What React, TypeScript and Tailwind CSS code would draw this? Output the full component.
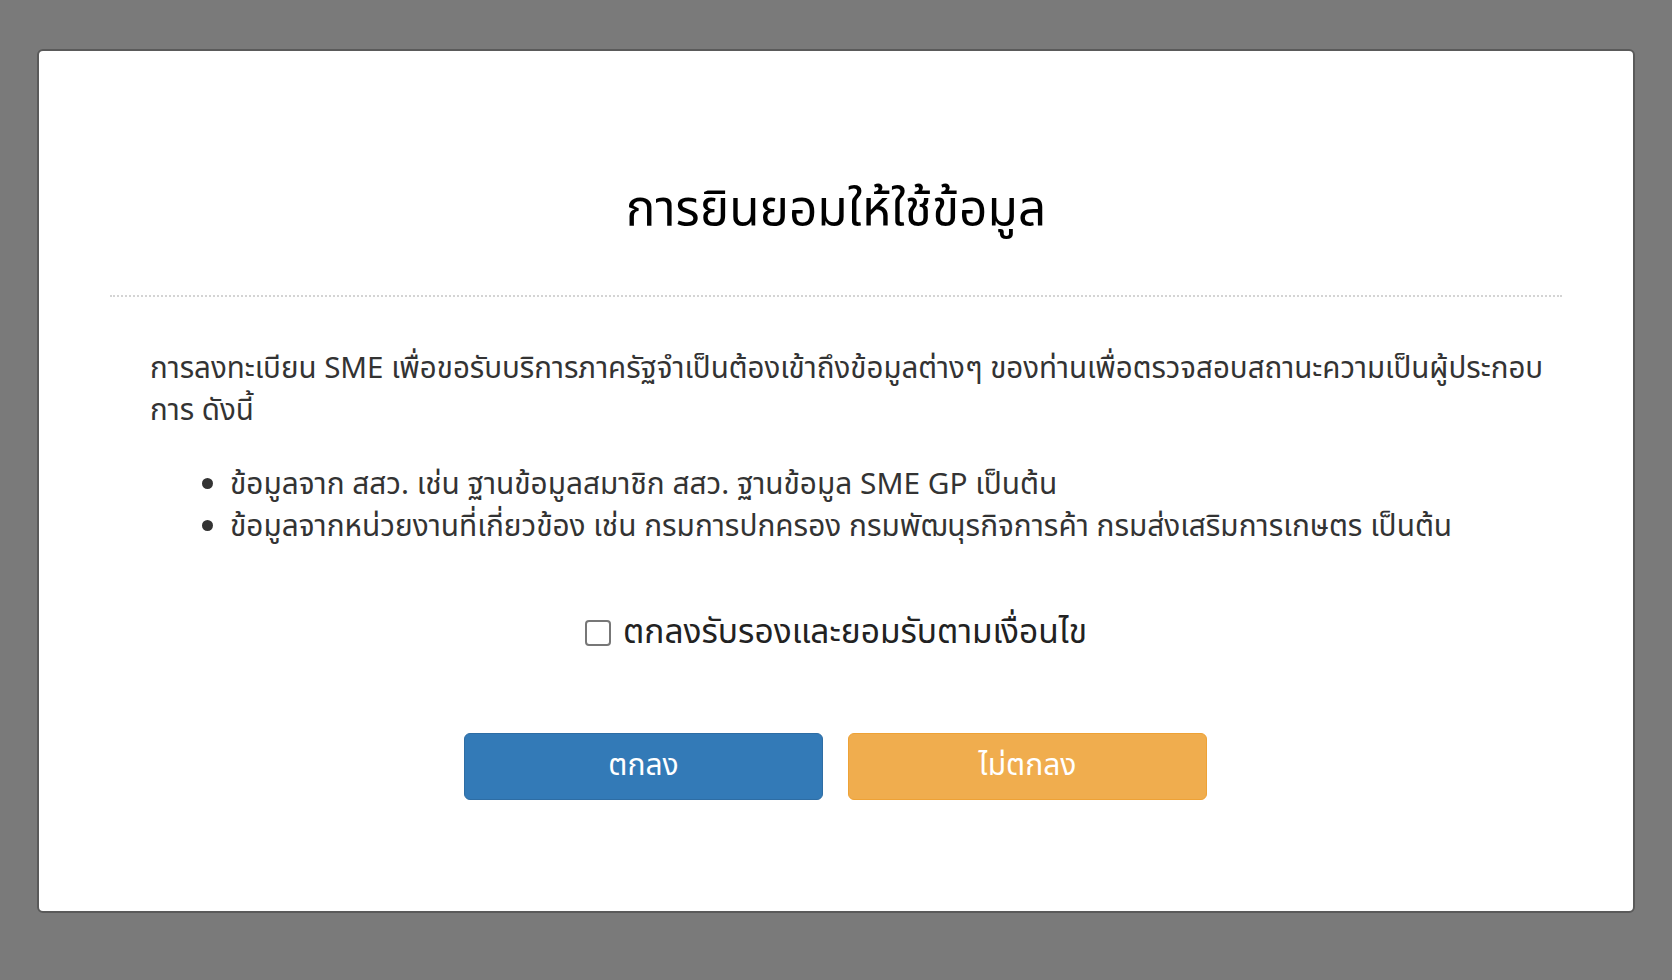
import { useState } from "react";

// consent modal over a grey backdrop
const App = () => {
  const [agree, setAgree] = useState<boolean>(false);
  const font = { fontFamily: '"Noto Sans Thai", "Noto Sans", "Liberation Sans", sans-serif' };

  return (
    <div className="w-full h-[980px] bg-[#7a7a7a] pt-[49px] pl-[37px]" style={font}>
      <div className="w-[1598px] h-[864px] bg-white border-2 border-[#5a5a5a] rounded-md px-[71px] flex flex-col">
        {/* title */}
        <h1 className="pt-[130px] text-center text-[49.5px] leading-[60px] text-black">
          การยินยอมให้ใช้ข้อมูล
        </h1>
        <hr className="mt-[54px] border-0 border-t-2 border-dotted border-[#d4d4d4]" />

        {/* body */}
        <div className="pl-[40px] pt-[52px] text-[29.5px] leading-[41.5px] text-[#333]">
          <p>
            การลงทะเบียน SME เพื่อขอรับบริการภาครัฐจำเป็นต้องเข้าถึงข้อมูลต่างๆ
            ของท่านเพื่อตรวจสอบสถานะความเป็นผู้ประกอบ
            <br />
            การ ดังนี้
          </p>
          <ul className="list-disc pl-[80px] mt-[32px] text-[29.8px]">
            <li>ข้อมูลจาก สสว. เช่น ฐานข้อมูลสมาชิก สสว. ฐานข้อมูล SME GP เป็นต้น</li>
            <li>
              ข้อมูลจากหน่วยงานที่เกี่ยวข้อง เช่น กรมการปกครอง กรมพัฒนุรกิจการค้า
              กรมส่งเสริมการเกษตร เป็นต้น
            </li>
          </ul>
        </div>

        {/* consent checkbox */}
        <label className="mt-[64px] flex items-center justify-center gap-[12px] text-[33.5px] leading-[44px] text-[#222] cursor-pointer select-none">
          <input
            type="checkbox"
            checked={agree}
            onChange={() => setAgree(!agree)}
            className="w-[26px] h-[26px] appearance-none border-2 border-[#777] rounded-[4px] bg-white checked:bg-[#337ab7]"
          />
          ตกลงรับรองและยอมรับตามเงื่อนไข
        </label>

        {/* actions */}
        <div className="mt-[78px] flex justify-center gap-[25px] pr-[1px]">
          <button className="w-[359px] h-[67px] rounded-[6px] bg-[#337ab7] border border-[#2e6da4] text-white text-[30px]">
            ตกลง
          </button>
          <button className="w-[359px] h-[67px] rounded-[6px] bg-[#f0ad4e] border border-[#eea236] text-white text-[30px]">
            ไม่ตกลง
          </button>
        </div>
      </div>
    </div>
  );
};

export default App;
